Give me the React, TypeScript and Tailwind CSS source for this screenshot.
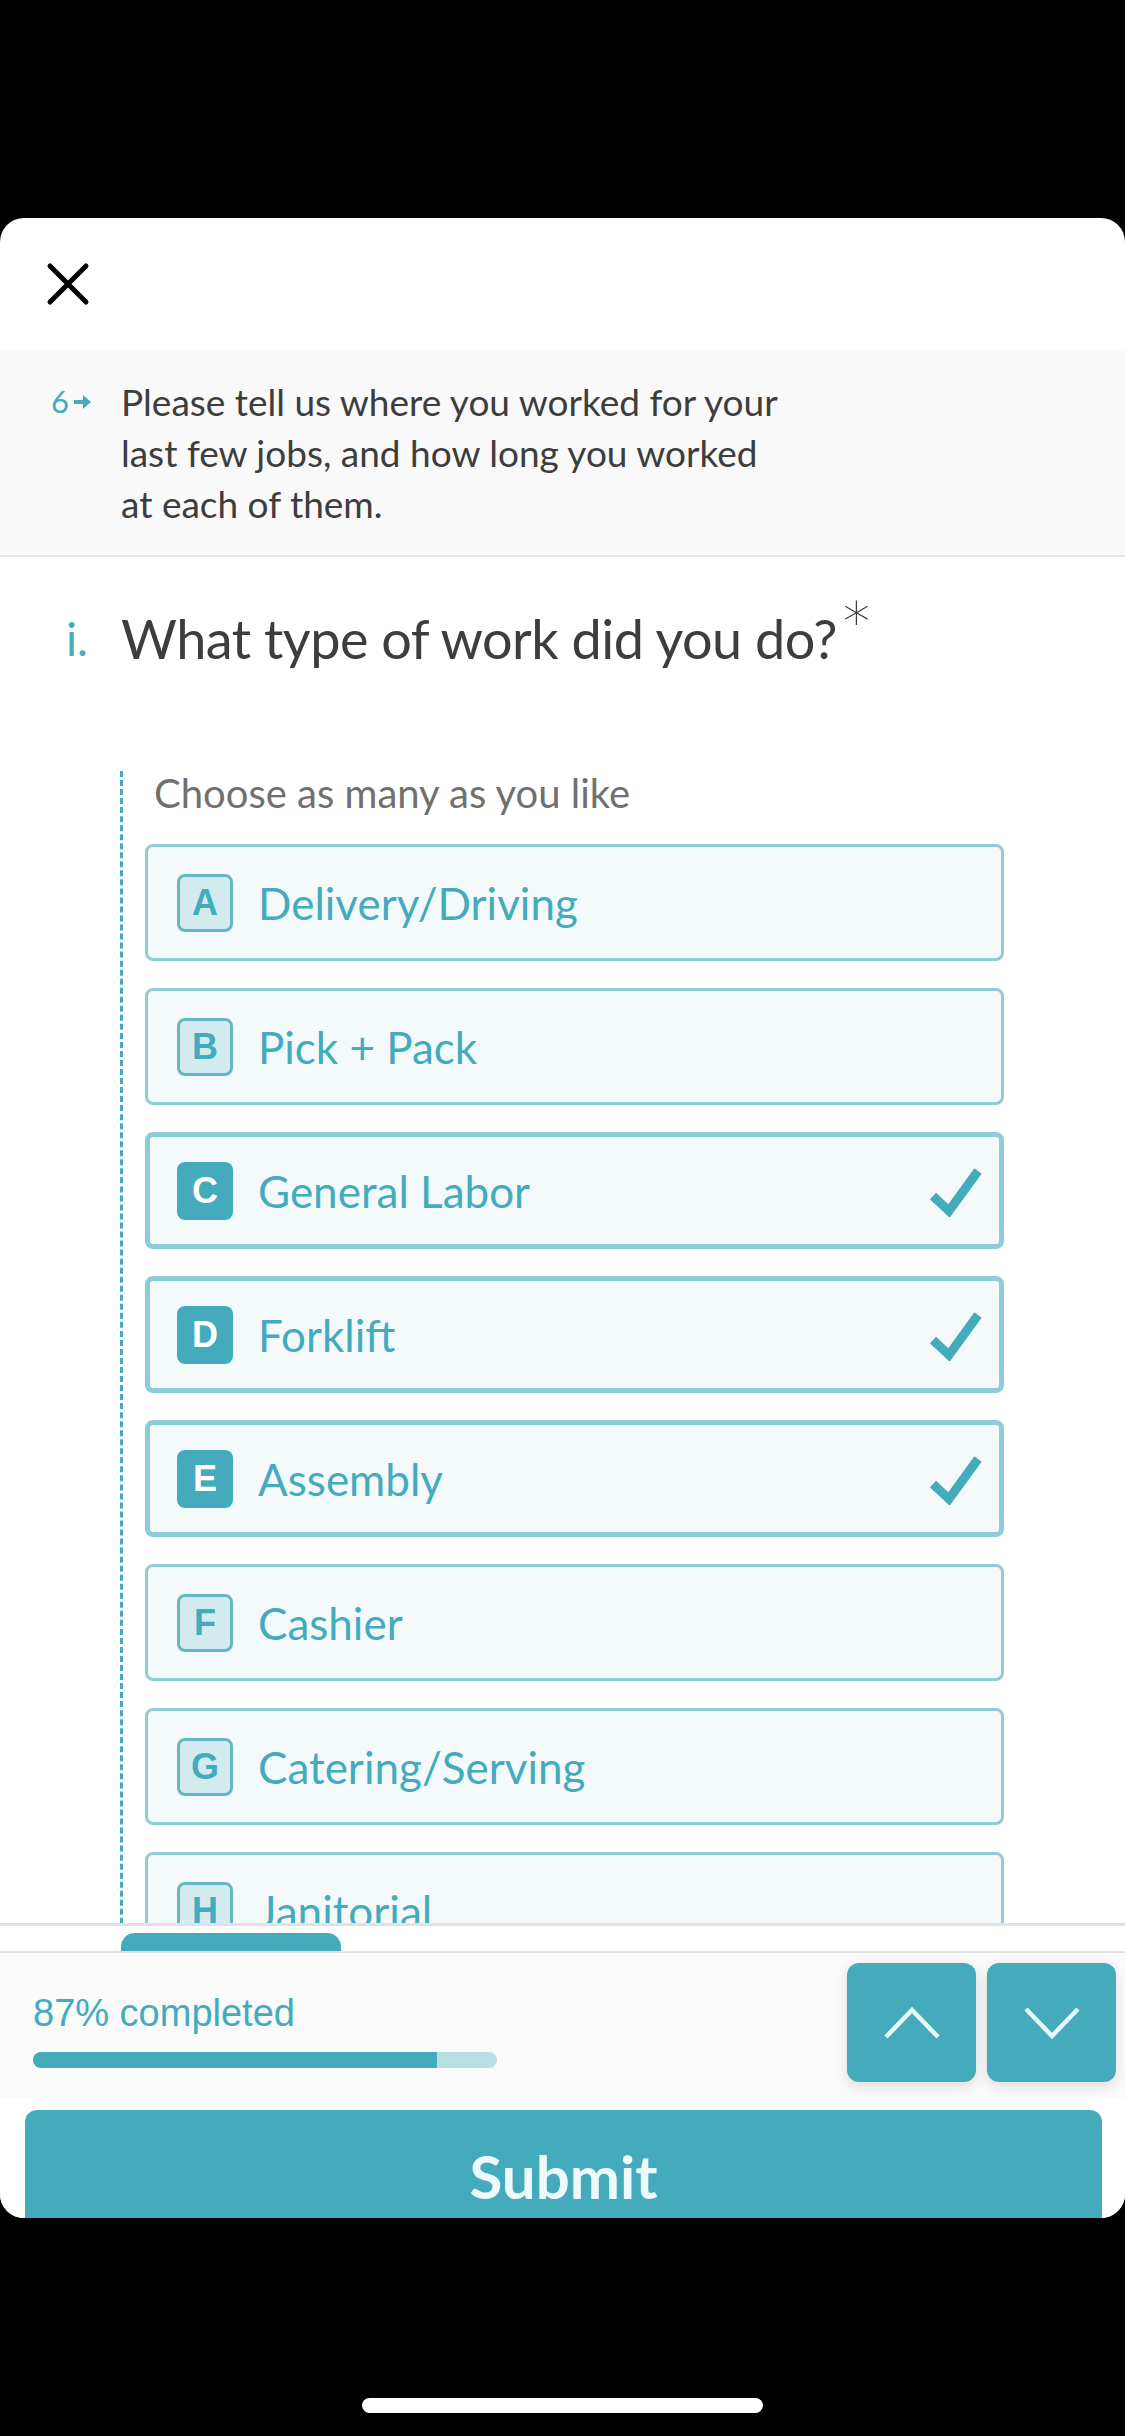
import React from 'react'

const teal = '#44abbd'

type Option = { key: string; label: string; selected?: boolean }

const options: Option[] = [
    { key: 'A', label: 'Delivery/Driving' },
    { key: 'B', label: 'Pick + Pack' },
    { key: 'C', label: 'General Labor', selected: true },
    { key: 'D', label: 'Forklift', selected: true },
    { key: 'E', label: 'Assembly', selected: true },
    { key: 'F', label: 'Cashier' },
    { key: 'G', label: 'Catering/Serving' },
    { key: 'H', label: 'Janitorial' },
]

function Check() {
    return (
        <svg width="56" height="52" viewBox="0 0 56 52" className="shrink-0">
            <polyline points="6,31 22,46 51,6" fill="none" stroke={teal} strokeWidth="9" strokeLinejoin="miter" />
        </svg>
    )
}

function OptionRow({ opt }: { opt: Option }) {
    return (
        <div
            className={
                opt.selected
                    ? 'flex items-center h-[117px] w-[859px] rounded-[8px] border-[5px] border-[#8ecdd7] bg-[#f4fafc] pl-[27px] pr-[16px]'
                    : 'flex items-center h-[117px] w-[859px] rounded-[8px] border-[3px] border-[#8ecdd7] bg-[#f4fafc] pl-[29px] pr-[18px]'
            }
        >
            <div
                className={
                    opt.selected
                        ? 'flex items-center justify-center w-[56px] h-[58px] rounded-[8px] bg-[#44abbd] text-white text-[36px] font-bold'
                        : 'flex items-center justify-center w-[56px] h-[58px] rounded-[8px] border-[3px] border-[#63b8c6] bg-[#d3ebef] text-[#44abbd] text-[36px] font-bold'
                }
                style={{ fontFamily: '"Liberation Sans", Arial, sans-serif' }}
            >
                {opt.key}
            </div>
            <div className="ml-[25px] flex-1 text-[44px] leading-none text-[#44abbd]">{opt.label}</div>
            {opt.selected && <Check />}
        </div>
    )
}

export default function App() {
    return (
        <div className="w-[1125px] h-[2436px] bg-black flex flex-col" style={{ fontFamily: 'Lato, "Open Sans", sans-serif' }}>
            <div className="h-[218px] shrink-0" />
            <div className="h-[2000px] shrink-0 bg-white rounded-[24px] overflow-hidden flex flex-col">
                {/* top bar with close */}
                <div className="h-[132px] shrink-0 flex items-center pl-[46px]">
                    <svg width="44" height="44" viewBox="0 0 44 44">
                        <path d="M4 4 L40 40 M40 4 L4 40" stroke="#000" strokeWidth="5" strokeLinecap="round" />
                    </svg>
                </div>

                {/* question header */}
                <div className="h-[207px] shrink-0 bg-[#f9f9f9] border-b-2 border-[#e4e4e4] flex items-start pt-[26px]">
                    <div className="w-[121px] shrink-0 flex items-center pl-[51px] h-[51px] text-[31px] leading-none text-[#44abbd]">
                        <span>6</span>
                        <svg width="18" height="16" viewBox="0 0 18 16" className="ml-[5px]">
                            <path d="M0 6 H9 V1 L17 8 L9 15 V10 H0 Z" fill={teal} />
                        </svg>
                    </div>
                    <p className="text-[37px] leading-[51px] text-[#3d3d3d]">
                        Please tell us where you worked for your
                        <br />
                        last few jobs, and how long you worked
                        <br />
                        at each of them.
                    </p>
                </div>

                {/* scroll content */}
                <div className="h-[1366px] shrink-0 overflow-hidden flex flex-col">
                    <div className="flex items-start pt-[50px]">
                        <div className="w-[121px] shrink-0 pl-[66px] text-[46px] leading-[64px] text-[#44abbd]">i.</div>
                        <h1 className="text-[54px] leading-[64px] text-[#3d3d3d] tracking-[-0.5px]">
                            What type of work did you do?
                        </h1>
                        <span
                            className="text-[54px] leading-none text-[#3d3d3d] ml-[6px] mt-[-12px]"
                            style={{ fontFamily: '"DejaVu Sans", sans-serif', fontWeight: 200 }}
                        >
                            *
                        </span>
                    </div>

                    <div className="mt-[100px] ml-[120px] border-l-[3px] border-dashed border-[#44abbd] pl-[22px] flex flex-col">
                        <div className="pl-[9px] text-[40px] leading-[44px] text-[#707070]">
                            Choose as many as you like
                        </div>
                        <div className="mt-[29px] flex flex-col gap-[27px]">
                            {options.map((o) => (
                                <OptionRow key={o.key} opt={o} />
                            ))}
                        </div>
                    </div>
                </div>

                {/* footer */}
                <div className="border-t-[3px] border-[#e2e2e2] shrink-0">
                    <div className="h-[25px] flex items-end pl-[121px]">
                        <div className="w-[220px] h-[18px] rounded-t-[14px] bg-[#44abbd]" />
                    </div>
                    <div className="h-[147px] bg-[#fafafa] border-t-2 border-[#e2e2e2] flex justify-between pl-[33px] pr-[9px] pt-[10px]">
                        <div className="flex flex-col pt-[30px]">
                            <div
                                className="text-[38px] leading-[40px] text-[#44abbd]"
                                style={{ fontFamily: '"Liberation Sans", Arial, sans-serif' }}
                            >
                                87% completed
                            </div>
                            <div className="mt-[19px] w-[464px] h-[16px] rounded-full bg-[#b9dfe5] overflow-hidden">
                                <div className="h-full bg-[#44abbd]" style={{ width: '87%' }} />
                            </div>
                        </div>
                        <div className="flex gap-[11px]">
                            <button className="w-[129px] h-[119px] rounded-[12px] bg-[#44abbd] flex items-center justify-center shadow-[0_4px_14px_rgba(0,0,0,0.12)]">
                                <svg width="60" height="34" viewBox="0 0 60 34">
                                    <polyline points="4,31 30,4 56,31" fill="none" stroke="#e9f7f9" strokeWidth="4.5" />
                                </svg>
                            </button>
                            <button className="w-[129px] h-[119px] rounded-[12px] bg-[#44abbd] flex items-center justify-center shadow-[0_4px_14px_rgba(0,0,0,0.12)]">
                                <svg width="60" height="34" viewBox="0 0 60 34">
                                    <polyline points="4,3 30,30 56,3" fill="none" stroke="#e9f7f9" strokeWidth="4.5" />
                                </svg>
                            </button>
                        </div>
                    </div>
                    <div className="bg-white pt-[12px] pl-[25px] pr-[23px]">
                        <button className="w-full h-[140px] rounded-t-[12px] bg-[#44abbd] flex justify-center pt-[30px]">
                            <span className="text-[60px] leading-[72px] font-bold text-[#eef9fb]">Submit</span>
                        </button>
                    </div>
                </div>
            </div>
            <div className="flex-1 flex justify-center pt-[180px]">
                <div className="w-[401px] h-[15px] rounded-full bg-white" />
            </div>
        </div>
    )
}
